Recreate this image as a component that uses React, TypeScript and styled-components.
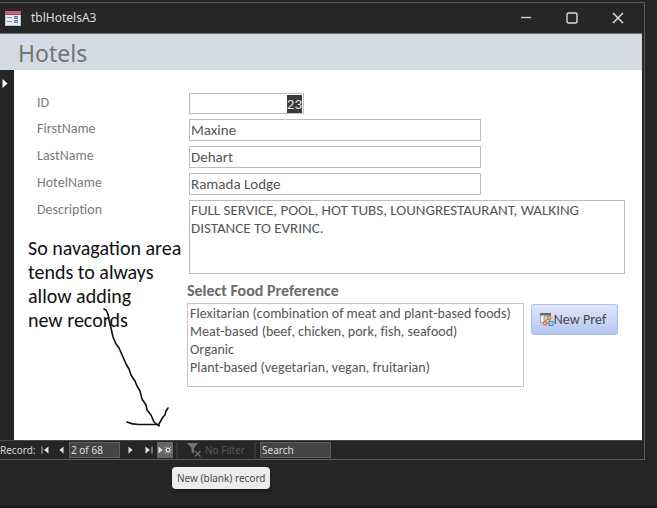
import React, { useEffect, useRef } from "react";
import styled, { createGlobalStyle } from "styled-components";

const humanist = `Carlito, Lato, "Open Sans", sans-serif`;
const system = `"Noto Sans", "Open Sans", sans-serif`;

const GlobalStyle = createGlobalStyle`
  * { box-sizing: border-box; }
  body { margin: 0; background: #262626; }
  button, input, textarea, select { font: inherit; color: inherit; margin: 0; border-radius: 0; }
`;

const Desktop = styled.div`
  min-height: 100vh;
  padding: 2px 12px 0 0;
  background: #262626;
  border-bottom: 3px solid #201d1e;
  font-family: ${humanist};
`;

const FormWindow = styled.section`
  position: relative;
  padding-right: 2px;
  border: 1px solid #5c5c5c;
  border-left: 0;
  background: #262626;
`;

const TitleBar = styled.header`
  display: flex;
  align-items: center;
  height: 31px;
  padding: 0 1px 0 5px;
  border-bottom: 1px solid #6e6e6e;
  color: #dedede;
  font: 12px/18px ${system};
`;

const WindowTitle = styled.span`
  flex: 1;
  margin-left: 10px;
`;

const CaptionButton = styled.button`
  display: flex;
  align-items: center;
  justify-content: center;
  width: 46px;
  height: 30px;
  padding: 0;
  border: 0;
  background: none;
  color: #dcdcdc;
`;

const FormHeader = styled.div`
  height: 36px;
  padding-left: 18px;
  background: #d5dbe5;
`;

const FormTitle = styled.h1`
  margin: 0;
  color: #737373;
  font: 400 23px/38px ${system};
`;

const FormBody = styled.div`
  display: flex;
  background: #fff;
  font-variant-ligatures: none;
`;

const RecordSelector = styled.div`
  flex: none;
  width: 14px;
  padding: 4px 0 0 2px;
  background: #262626;
`;

const Detail = styled.div`
  flex: 1;
  min-width: 0;
  padding: 23px 17px 53px 23px;
`;

const Fields = styled.div`
  display: grid;
  grid-template-columns: 147px minmax(0, 1fr);
  column-gap: 5px;
  row-gap: 5px;
`;

const FieldLabel = styled.label`
  color: #7a7a7a;
  font-size: 14px;
  font-kerning: none;
  line-height: 20px;
`;

const TextBox = styled.input<{ $width: number; $numeric?: boolean }>`
  width: 100%;
  max-width: ${(p) => p.$width}px;
  height: ${(p) => (p.$numeric ? 21 : 22)}px;
  padding: 0 1px;
  border: 1px solid #bdbdbd;
  outline: 0;
  background: #fff;
  color: #555;
  caret-color: transparent;
  font-size: 15px;
  line-height: 18px;
  text-align: ${(p) => (p.$numeric ? "right" : "left")};
  &::selection { background: #3b3b3b; color: #e6e6e6; }
`;

const MemoBox = styled.textarea`
  display: block;
  width: 100%;
  height: 74px;
  padding: 0 40px 0 1px;
  border: 1px solid #bdbdbd;
  outline: 0;
  resize: none;
  background: #fff;
  color: #555;
  font-size: 15px;
  line-height: 18px;
  overflow: hidden;
`;

const Preference = styled.div`
  margin: 7px 0 0 150px;
`;

const PreferenceLabel = styled.label`
  display: block;
  color: #6b6b6b;
  font-size: 16px;
  font-weight: 700;
  line-height: 20px;
`;

const PreferenceRow = styled.div`
  display: flex;
  align-items: flex-start;
  gap: 7px;
`;

const ListBox = styled.select`
  width: 337px;
  height: 84px;
  margin-top: 2px;
  padding: 1px 0 0;
  border: 1px solid #c6c6c6;
  outline: 0;
  background: #fff;
  color: #555;
  overflow: hidden;
`;

const ListItem = styled.option`
  min-height: 18px;
  padding: 0 2px;
  font-size: 14px;
  font-kerning: none;
  font-variant-ligatures: none;
  line-height: 18px;
`;

const CommandButton = styled.button`
  display: flex;
  align-items: center;
  justify-content: center;
  width: 87px;
  height: 31px;
  margin-top: 3px;
  padding: 0 3px 0 0;
  border: 1px solid #a9bbe8;
  border-radius: 3px;
  background: linear-gradient(#dfe6f9, #c9d6f7 50%, #b5c7f3);
  color: #444;
  font-size: 14px;
  font-kerning: none;
  white-space: nowrap;
`;

const NavBar = styled.nav`
  display: flex;
  align-items: center;
  height: 19px;
  border-top: 1px solid #4a4a4a;
  color: #d6d6d6;
  font: 10px/16px ${system};
`;

const NavButton = styled.button<{ $width: number; $active?: boolean }>`
  display: flex;
  align-items: center;
  justify-content: center;
  width: ${(p) => p.$width}px;
  height: 16px;
  padding: 0;
  border: 0;
  background: ${(p) => (p.$active ? "#666" : "none")};
  color: #e6e6e6;
`;

const NavLabel = styled.label`
  width: 37px;
  white-space: nowrap;
`;

const NavInput = styled.input<{ $width: number }>`
  width: ${(p) => p.$width}px;
  height: 16px;
  padding: 0 1px;
  border: 1px solid #5e5e5e;
  outline: 0;
  background: #444;
  color: #dedede;
  &::placeholder { color: #dedede; opacity: 1; }
`;

const Separator = styled.span`
  width: 2px;
  height: 16px;
  margin: 0 4px 0 3px;
  background: #363636;
`;

const FilterButton = styled.button`
  display: flex;
  align-items: center;
  gap: 3px;
  width: 69px;
  padding: 0 0 0 5px;
  border: 0;
  background: none;
  white-space: nowrap;
  &:disabled { color: #585858; }
`;

const Tooltip = styled.div`
  position: absolute;
  left: 172px;
  top: 464px;
  padding: 3px 5px;
  border-radius: 4px;
  background: #ececec;
  box-shadow: 0 2px 4px rgba(0, 0, 0, 0.4);
  color: #4a4a4a;
  font: 10px/16px ${system};
  white-space: nowrap;
`;

const Note = styled.p`
  position: absolute;
  left: 28px;
  top: 233px;
  margin: 0;
  color: #111;
  font-size: 20px;
  line-height: 24px;
  white-space: pre-line;
  pointer-events: none;
`;

const NoteArrow = styled.svg`
  position: absolute;
  left: 100px;
  top: 301px;
  pointer-events: none;
`;

const FormIcon = () => (
  <svg width="16" height="15" viewBox="0 0 16 15" aria-hidden="true">
    <rect width="16" height="15" fill="#e8edf7" />
    <rect width="16" height="4" fill="#c65f86" />
    <path d="M0 3.5h16" stroke="#a9446b" />
    <path d="M2 6.5h5M2 10.5h5" stroke="#7f8fb5" />
    <path d="M9.500 5.500h3v2h-3zM9.500 9.500h3v2h-3z" fill="#c5cde0" stroke="#5d6e9b" />
    <path d="M.5 4v10.500h15V4" fill="none" stroke="#b9c5de" />
  </svg>
);

const MinimizeIcon = () => (
  <svg width="12" height="12" viewBox="0 0 12 12" aria-hidden="true">
    <path d="M1 5.500h10" stroke="currentColor" strokeWidth="1.300" />
  </svg>
);

const MaximizeIcon = () => (
  <svg width="12" height="12" viewBox="0 0 12 12" aria-hidden="true">
    <rect x="1" y="1" width="10" height="10" rx="1.500" fill="none" stroke="currentColor" strokeWidth="1.400" />
  </svg>
);

const CloseIcon = () => (
  <svg width="12" height="12" viewBox="0 0 12 12" aria-hidden="true">
    <path d="M1 1l10 10M11 1L1 11" stroke="currentColor" strokeWidth="1.500" />
  </svg>
);

const CurrentIcon = () => (
  <svg width="6" height="10" viewBox="0 0 6 10" aria-hidden="true">
    <path d="M0.500 0v9l5-4.500z" fill="#fff" />
  </svg>
);

const FirstIcon = () => (
  <svg width="8" height="8" viewBox="0 0 8 8" aria-hidden="true">
    <path d="M1 .5v7" stroke="currentColor" opacity=".8" />
    <path d="M7.500 .5v7L3 4z" fill="currentColor" />
  </svg>
);

const PreviousIcon = () => (
  <svg width="8" height="8" viewBox="0 0 8 8" aria-hidden="true">
    <path d="M6.500 .5v7L2.500 4z" fill="currentColor" />
  </svg>
);

const NextIcon = () => (
  <svg width="8" height="8" viewBox="0 0 8 8" aria-hidden="true">
    <path d="M2.500 .5v7l4-3.500z" fill="currentColor" />
  </svg>
);

const LastIcon = () => (
  <svg width="8" height="8" viewBox="0 0 8 8" aria-hidden="true">
    <path d="M.5 .5v7L5 4z" fill="currentColor" />
    <path d="M7 .5v7" stroke="currentColor" opacity=".8" />
  </svg>
);

const NewRecordIcon = () => (
  <svg width="14" height="8" viewBox="0 0 14 8" aria-hidden="true">
    <path d="M.5 .5v7L4.500 4z" fill="currentColor" />
    <g fill="none" stroke="currentColor" strokeWidth=".8">
      <rect x="8.500" y="2.500" width="3" height="3" />
      <path d="M7 1l1.500 1.500M13 1l-1.500 1.500M7 7l1.500-1.500M13 7l-1.500-1.500M10 .5v2M10 7.500v-2M6.500 4h2M13.500 4h-2" />
    </g>
  </svg>
);

const NoFilterIcon = () => (
  <svg width="15" height="14" viewBox="0 0 15 14" aria-hidden="true">
    <path d="M0 0h11L7 5v6L4.500 9V5z" fill="#757575" />
    <path d="M8 8l5.500 5.500M13.500 8L8 13.500" stroke="#696969" strokeWidth="1.500" />
  </svg>
);

const MacroIcon = () => (
  <svg width="14" height="13" viewBox="0 0 14 13" aria-hidden="true">
    <path d="M.5 2v7.500H4V3h6V1" fill="#fff" stroke="#9a9a9a" />
    <rect width="11" height="2.500" fill="#6b6b6b" />
    <g fill="none" stroke="#e07b35" strokeWidth="1.300">
      <circle cx="9.300" cy="5" r="1.500" />
      <circle cx="5" cy="10.300" r="1.700" />
      <path d="M8 6L4.500 8M9.500 6.500v2M6.500 10.500h2" />
    </g>
    <rect x="9" y="8.500" width="4" height="4" fill="#d5e4f5" stroke="#4c83bd" />
    <path d="M9.500 11.500l2-1.500" stroke="#4c83bd" />
  </svg>
);

const fields = [
  { id: "firstName", label: "FirstName", value: "Maxine" },
  { id: "lastName", label: "LastName", value: "Dehart" },
  { id: "hotelName", label: "HotelName", value: "Ramada Lodge" },
];

const preferences = [
  "Flexitarian (combination of meat and plant-based foods)",
  "Meat-based (beef, chicken, pork, fish, seafood)",
  "Organic",
  "Plant-based (vegetarian, vegan, fruitarian)",
];

export default function App() {
  const idRef = useRef<HTMLInputElement>(null);

  useEffect(() => {
    idRef.current?.focus();
    idRef.current?.select();
  }, []);

  return (
    <Desktop>
      <GlobalStyle />
      <FormWindow>
        <TitleBar>
          <FormIcon />
          <WindowTitle>tblHotelsA3</WindowTitle>
          <CaptionButton aria-label="Minimize"><MinimizeIcon /></CaptionButton>
          <CaptionButton aria-label="Maximize"><MaximizeIcon /></CaptionButton>
          <CaptionButton aria-label="Close"><CloseIcon /></CaptionButton>
        </TitleBar>
        <FormHeader>
          <FormTitle>Hotels</FormTitle>
        </FormHeader>
        <FormBody>
          <RecordSelector><CurrentIcon /></RecordSelector>
          <Detail>
            <Fields>
              <FieldLabel htmlFor="id">ID</FieldLabel>
              <TextBox id="id" ref={idRef} $width={115} $numeric defaultValue="23" />
              {fields.map((f) => (
                <React.Fragment key={f.id}>
                  <FieldLabel htmlFor={f.id}>{f.label}</FieldLabel>
                  <TextBox id={f.id} $width={292} defaultValue={f.value} />
                </React.Fragment>
              ))}
              <FieldLabel htmlFor="description">Description</FieldLabel>
              <MemoBox
                id="description"
                spellCheck={false}
                defaultValue="FULL SERVICE, POOL, HOT TUBS, LOUNGRESTAURANT, WALKING DISTANCE TO EVRINC."
              />
            </Fields>
            <Preference>
              <PreferenceLabel htmlFor="preference">Select Food Preference</PreferenceLabel>
              <PreferenceRow>
                <ListBox id="preference" size={4}>
                  {preferences.map((p) => (
                    <ListItem key={p}>{p}</ListItem>
                  ))}
                </ListBox>
                <CommandButton><MacroIcon />New Pref</CommandButton>
              </PreferenceRow>
            </Preference>
          </Detail>
        </FormBody>
        <NavBar aria-label="Record navigation">
          <NavLabel htmlFor="record">Record:</NavLabel>
          <NavButton $width={16} aria-label="First record"><FirstIcon /></NavButton>
          <NavButton $width={16} aria-label="Previous record"><PreviousIcon /></NavButton>
          <NavInput id="record" $width={51} defaultValue="2 of 68" />
          <NavButton $width={20} aria-label="Next record"><NextIcon /></NavButton>
          <NavButton $width={17} aria-label="Last record"><LastIcon /></NavButton>
          <NavButton $width={16} $active aria-label="New (blank) record"><NewRecordIcon /></NavButton>
          <Separator />
          <FilterButton disabled><NoFilterIcon />No Filter</FilterButton>
          <Separator />
          <NavInput $width={71} placeholder="Search" aria-label="Search" />
        </NavBar>
        <Note>{"So navagation area\ntends to always\nallow adding\nnew records"}</Note>
        <NoteArrow width="72" height="128" viewBox="100 304 72 128" fill="none" stroke="#111" strokeWidth="1.600" strokeLinecap="round" strokeLinejoin="round" aria-hidden="true">
          <path d="M104 309l2 1 2 4 1 6 2 8 2 9 3 7 3 4 4 9 3 7 3 5 2 6 4 6 2 5 3 5 2 8 4 6 1 5 4 5 3 7 5 4V424l4-7 2-2 1-4 2-3" />
          <path d="M127 422c4 2 8 2.500 12 2.500h19" />
        </NoteArrow>
        <Tooltip role="tooltip">New (blank) record</Tooltip>
      </FormWindow>
    </Desktop>
  );
}
